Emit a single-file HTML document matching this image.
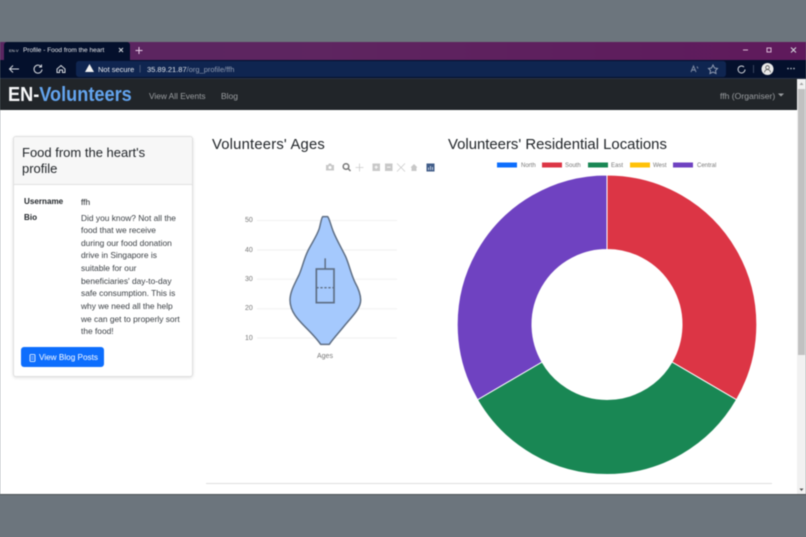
<!DOCTYPE html>
<html lang="en">
<head>
<meta charset="utf-8">
<title>Profile - Food from the heart</title>
<style>
html,body{margin:0;padding:0}
body{width:806px;height:537px;overflow:hidden;position:relative;background:#6c757d;font-family:"Liberation Sans",sans-serif;filter:blur(.4px)}
.a{position:absolute;white-space:nowrap}
svg{position:absolute;left:0;top:0}
</style>
</head>
<body>
<div class="a" style="left:0;top:42px;width:806px;height:18px;background:linear-gradient(90deg,#5a2660 0,#5e2560 40%,#5f1a5c 100%)"></div>
<div class="a" style="left:4px;top:42px;width:126px;height:18px;background:#04102c;border-radius:3px 3px 0 0"></div>
<div class="a" style="left:0;top:60px;width:806px;height:18px;background:#04102c"></div>
<div class="a" style="left:76px;top:61px;width:650px;height:16px;background:#0f2550;border-radius:3px"></div>
<div class="a" style="left:0;top:78px;width:806px;height:1px;background:#2a3345"></div>
<div class="a" style="left:9px;top:47.500px;font-size:4px;color:#ddd">EN-V</div>
<div class="a" style="left:23px;top:46.500px;font-size:6.500px;color:#e4e6ea">Profile - Food from the heart</div>
<div class="a" style="left:98px;top:64.500px;font-size:7.500px;color:#e8eaee">Not secure</div>
<div class="a" style="left:139px;top:64px;font-size:8px;color:#65708a">|</div>
<div class="a" style="left:147px;top:64.500px;font-size:7.500px;color:#dfe3ea">35.89.21.87<span style="color:#8f9ab0">/org_profile/ffh</span></div>

<div class="a" style="left:0;top:79px;width:797px;height:31px;background:#212529"></div>
<div class="a" style="left:8px;top:84px;font-size:20px;font-weight:bold;color:#f8f9fa;transform:scaleX(.908);transform-origin:0 0">EN-<span style="color:#63a4ee">Volunteers</span></div>
<div class="a" style="left:149px;top:90.500px;font-size:8.300px;color:#9b9ea1">View All Events</div>
<div class="a" style="left:221px;top:90.500px;font-size:8.500px;color:#9b9ea1">Blog</div>
<div class="a" style="left:720px;top:90.500px;font-size:8.600px;color:#9b9ea1">ffh (Organiser)</div>

<div class="a" style="left:0;top:110px;width:797px;height:384px;background:#fff"></div>
<div class="a" style="left:797px;top:79px;width:9px;height:415px;background:#f1f1f1"></div>
<div class="a" style="left:798px;top:89px;width:7px;height:266px;background:#c1c1c1"></div>
<div class="a" style="left:0;top:494px;width:806px;height:1px;background:#4d5257"></div>

<div class="a" style="left:13px;top:136px;width:178px;height:239px;border:1px solid #dfdfdf;border-radius:3px;box-shadow:0 1px 3px rgba(0,0,0,.12);background:#fff"></div>
<div class="a" style="left:14px;top:137px;width:178px;height:47px;background:#f7f7f7;border-bottom:1px solid #e2e2e2;border-radius:3px 3px 0 0"></div>
<div class="a" style="left:22px;top:145px;font-size:13px;line-height:15.500px;color:#212529">Food from the heart's<br>profile</div>
<div class="a" style="left:24px;top:196.500px;font-size:8.100px;font-weight:bold;color:#212529">Username</div>
<div class="a" style="left:81px;top:196.500px;font-size:8.400px;color:#212529">ffh</div>
<div class="a" style="left:24px;top:213px;font-size:8.100px;font-weight:bold;color:#212529">Bio</div>
<div class="a" style="left:81px;top:211.500px;font-size:8.400px;line-height:12.650px;color:#3a3f44">Did you know? Not all the<br>food that we receive<br>during our food donation<br>drive in Singapore is<br>suitable for our<br>beneficiaries' day-to-day<br>safe consumption. This is<br>why we need all the help<br>we can get to properly sort<br>the food!</div>
<div class="a" style="left:21px;top:347px;width:83px;height:20px;background:#0d6efd;border-radius:3px"></div>
<div class="a" style="left:39px;top:352.500px;font-size:8.200px;color:#fff">View Blog Posts</div>

<div class="a" style="left:212px;top:137px;font-size:14.800px;color:#212529;letter-spacing:.2px">Volunteers' Ages</div>
<div class="a" style="left:448px;top:137px;font-size:14.900px;color:#212529">Volunteers' Residential Locations</div>
<div class="a" style="left:206px;top:483px;width:566px;height:1px;background:#dedede"></div>

<div class="a" style="left:245px;top:217px;font-size:7px;color:#777">50</div>
<div class="a" style="left:245px;top:246.500px;font-size:7px;color:#777">40</div>
<div class="a" style="left:245px;top:275.500px;font-size:7px;color:#777">30</div>
<div class="a" style="left:245px;top:305px;font-size:7px;color:#777">20</div>
<div class="a" style="left:245px;top:334.500px;font-size:7px;color:#777">10</div>
<div class="a" style="left:317px;top:353px;font-size:7px;color:#777">Ages</div>

<div class="a" style="left:521px;top:162.500px;font-size:6px;color:#777">North</div>
<div class="a" style="left:565px;top:162.500px;font-size:6px;color:#777">South</div>
<div class="a" style="left:611px;top:162.500px;font-size:6px;color:#777">East</div>
<div class="a" style="left:653px;top:162.500px;font-size:6px;color:#777">West</div>
<div class="a" style="left:697px;top:162.500px;font-size:6px;color:#777">Central</div>

<svg width="806" height="537" viewBox="0 0 806 537">
  <!-- browser chrome icons -->
  <g fill="none" stroke="#d5d8de" stroke-width="1">
    <path d="M119 48l4 4M123 48l-4 4"/>
    <path d="M139 47v7M135.500 50.500h7" stroke="#e6c9e6"/>
    <path d="M19 69H10M13 65.500L9.500 69l3.500 3.500"/>
    <path d="M41 66.500a4 4 0 1 0 1 3M41.500 64.500v2.500h-2.500"/>
    <path d="M57 69l4-3.500 4 3.500v3.500h-2.500v-2.500h-3v2.500H57z"/>
    <path d="M743 50h5" stroke="#d7b5d3"/>
    <rect x="767" y="48" width="4" height="4" stroke="#d7b5d3"/>
    <path d="M791 47.500l5 5M796 47.500l-5 5"/>
    <path d="M744 67a3.500 3.500 0 1 0 1 2.500"/>
    <path d="M753.500 65v8" stroke="#3a4560"/>
    <path d="M691 72l2.500-6 2.500 6M692 70h3M697 66.500l1 2" stroke="#7f8ba3"/>
    <path d="M713 65l1.500 3 3 .5-2 2 .5 3-3-1.500-3 1.500.5-3-2-2 3-.5z" stroke="#8f9ab0"/>
  </g>
  <path d="M85 72l4.500-8 4.500 8z" fill="#f1f1f1"/>
  <circle cx="767.500" cy="69" r="6" fill="#e9e9e9"/>
  <circle cx="767.500" cy="67.500" r="1.800" fill="none" stroke="#555" stroke-width=".8"/>
  <path d="M764.500 72.500a3 3 0 0 1 6 0" fill="none" stroke="#555" stroke-width=".8"/>
  <g fill="#c9ccd3"><circle cx="788" cy="68.500" r=".8"/><circle cx="791" cy="68.500" r=".8"/><circle cx="794" cy="68.500" r=".8"/></g>
  <path d="M778 93.500h6l-3 3z" fill="#9b9ea1"/>
  <path d="M799.500 85l2-2.500 2 2.500z" fill="#a3a3a3"/>
  <path d="M799.500 488.500l2 2.500 2-2.500z" fill="#505050"/>

  <!-- button icon -->
  <rect x="30" y="354.500" width="5" height="7" rx=".8" fill="none" stroke="#fff" stroke-width=".8"/>
  <path d="M31.200 357h2.600M31.200 359h2.600" stroke="#fff" stroke-width=".6"/>

  <!-- plot toolbar -->
  <g fill="#c8c8c8">
    <path d="M326 165h2l1-1.500h2l1 1.500h2v5.500h-8z"/>
    <path d="M372.500 163.500h7.500v7.500h-7.500zM385 163.500h7.500v7.500H385z"/>
    <path d="M410.500 167.500l3.500-3.500 3.500 3.500h-1v3.500h-5v-3.500z"/>
  </g>
  <circle cx="330" cy="167.500" r="1.500" fill="#fff"/>
  <path d="M374.500 167.200h3.500M376.200 165.500V169M387 167.200h3.500" stroke="#fff" stroke-width=".9"/>
  <circle cx="346" cy="166.500" r="2.800" fill="none" stroke="#777" stroke-width="1.500"/>
  <path d="M348 168.500l2.500 2.500" stroke="#777" stroke-width="1.500"/>
  <path d="M359.500 163.500v8M355.500 167.500h8M397 163.500l8 8M405 163.500l-8 8" stroke="#ccc" stroke-width=".8" fill="none"/>
  <rect x="426.500" y="163.500" width="8" height="8" fill="#405c88"/>
  <path d="M428.500 170v-2.500M430.500 170v-4M432.500 170v-3" stroke="#dfe6f0" stroke-width=".8"/>

  <!-- violin gridlines -->
  <path d="M257 220.500H397M257 250H397M257 279.300H397M257 308.700H397M257 338H397" stroke="#f1f1f1" stroke-width="1"/>
  <!-- violin -->
  <g transform="translate(230 205) scale(.33333)">
    <path d="M278 35H293C298 40 302 60 310 80C320 105 335 130 347 155C358 180 362 205 375 232C385 250 392 268 392 285C392 310 370 330 345 360C325 385 310 400 298 418H272C260 400 245 385 225 365C205 345 180 320 180 285C180 260 195 235 207 210C218 185 222 160 235 135C248 110 262 90 268 70C272 55 274 40 278 35Z" fill="#a5c9fd" stroke="#5f6f85" stroke-width="4.500" stroke-linejoin="round"/>
    <rect x="259" y="192" width="53" height="101" fill="none" stroke="#5f6f85" stroke-width="5"/>
    <path d="M285.500 192V160" stroke="#5f6f85" stroke-width="4.500"/>
    <path d="M259 248H312" stroke="#5f6f85" stroke-width="4" stroke-dasharray="7 5"/>
  </g>

  <!-- legend swatches -->
  <rect x="497" y="162.500" width="20" height="5" fill="#0d6efd"/>
  <rect x="542" y="162.500" width="20" height="5" fill="#dc3545"/>
  <rect x="588" y="162.500" width="20" height="5" fill="#198754"/>
  <rect x="630" y="162.500" width="20" height="5" fill="#ffc107"/>
  <rect x="673" y="162.500" width="20" height="5" fill="#6f42c1"/>

  <!-- donut -->
  <g stroke="#fff" stroke-width="1">
    <path d="M607 175A149.500 149.500 0 0 1 736.500 399.750L671.950 362A75 75 0 0 0 607 249.500Z" fill="#dc3545"/>
    <path d="M736.500 399.750A149.500 149.500 0 0 1 477.500 399.750L542.050 362A75 75 0 0 0 671.950 362Z" fill="#198754"/>
    <path d="M477.500 399.750A149.500 149.500 0 0 1 607 175V249.500A75 75 0 0 0 542.050 362Z" fill="#6f42c1"/>
  </g>
</svg>
</body>
</html>
